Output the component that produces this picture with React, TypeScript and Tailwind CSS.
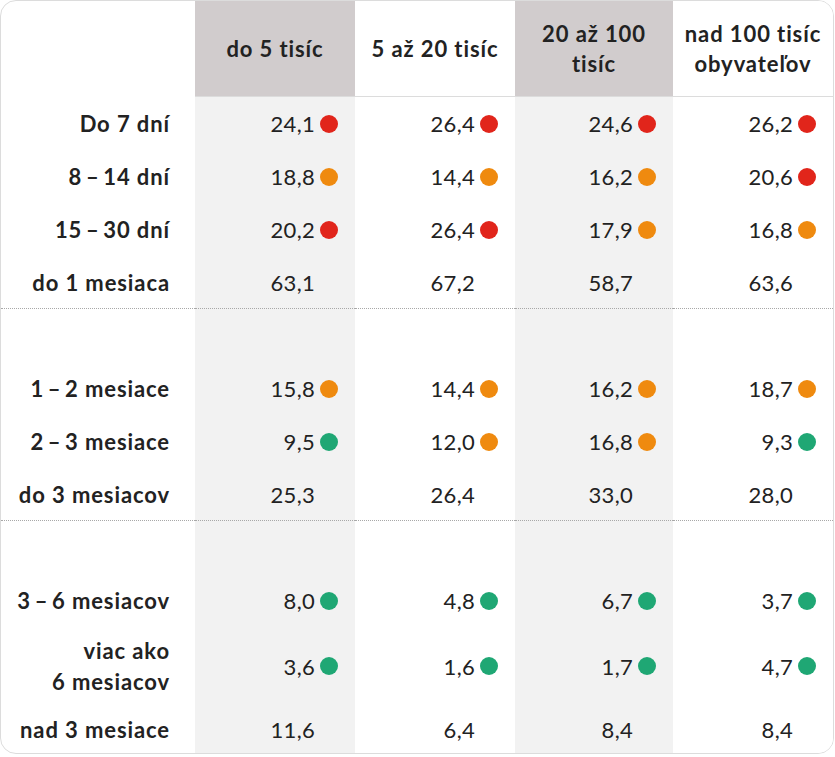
import React from "react";

type Dot = "r" | "o" | "g" | null;
type Row = { label: React.ReactNode; vals: [string, Dot][]; h: string; dotted?: boolean };

const R = "r", O = "o", G = "g";
const D = "\u2009–\u2009";

const rows: (Row | "spacer")[] = [
  { label: "Do 7 dní", vals: [["24,1", R], ["26,4", R], ["24,6", R], ["26,2", R]], h: "h-[53px]" },
  { label: `8${D}14 dní`, vals: [["18,8", O], ["14,4", O], ["16,2", O], ["20,6", R]], h: "h-[53px]" },
  { label: `15${D}30 dní`, vals: [["20,2", R], ["26,4", R], ["17,9", O], ["16,8", O]], h: "h-[53px]" },
  { label: "do 1 mesiaca", vals: [["63,1", null], ["67,2", null], ["58,7", null], ["63,6", null]], h: "h-[53px]", dotted: true },
  "spacer",
  { label: `1${D}2 mesiace`, vals: [["15,8", O], ["14,4", O], ["16,2", O], ["18,7", O]], h: "h-[53px]" },
  { label: `2${D}3 mesiace`, vals: [["9,5", G], ["12,0", O], ["16,8", O], ["9,3", G]], h: "h-[53px]" },
  { label: "do 3 mesiacov", vals: [["25,3", null], ["26,4", null], ["33,0", null], ["28,0", null]], h: "h-[53px]", dotted: true },
  "spacer",
  { label: `3${D}6 mesiacov`, vals: [["8,0", G], ["4,8", G], ["6,7", G], ["3,7", G]], h: "h-[53px]" },
  {
    label: (
      <>
        viac ako
        <br />6 mesiacov
      </>
    ),
    vals: [["3,6", G], ["1,6", G], ["1,7", G], ["4,7", G]],
    h: "h-[78px]",
  },
  { label: "nad 3 mesiace", vals: [["11,6", null], ["6,4", null], ["8,4", null], ["8,4", null]], h: "h-[48px]" },
];

const dotClass = (d: Dot) =>
  d === "r" ? "bg-[#e1251b]" : d === "o" ? "bg-[#ef8a0f]" : d === "g" ? "bg-[#1fa774]" : "bg-transparent";

const colBg = (i: number) => (i === 0 || i === 2 ? "bg-[#f2f2f2]" : "bg-white");

export default function App() {
  return (
    <div className="w-[834px] h-[754px] bg-white" style={{ fontFamily: "Lato, 'Open Sans', sans-serif" }}>
      <div className="w-[834px] h-[754px] border border-[#dcdcdc] rounded-[16px] overflow-hidden text-[#222222]">
        <div className="grid grid-cols-[194px_160px_160px_158px_160px]">
          {/* header */}
          <div className="h-[96px]" />
          {["do 5 tisíc", "5 až 20 tisíc", "20 až 100\ntisíc", "nad 100 tisíc\nobyvateľov"].map((t, i) => (
            <div
              key={i}
              className={`h-[96px] border-b border-[#dcdcdc] flex items-center justify-center text-center text-[22px] leading-[30px] tracking-[0.9px] font-bold whitespace-pre-line ${
                i === 0 || i === 2 ? "bg-[#d1cccd]" : "bg-white"
              }`}
            >
              {t}
            </div>
          ))}
          {rows.map((row, ri) =>
            row === "spacer" ? (
              <React.Fragment key={ri}>
                <div className="h-[53px]" />
                {[0, 1, 2, 3].map((i) => (
                  <div key={i} className={`h-[53px] ${colBg(i)}`} />
                ))}
              </React.Fragment>
            ) : (
              <React.Fragment key={ri}>
                <div
                  className={`${row.h} flex items-center justify-end pr-[25px] text-right text-[22px] leading-[31px] tracking-[0.9px] font-bold ${
                    row.dotted ? "border-b border-dotted border-[#a8a8a8]" : ""
                  }`}
                >
                  <span>{row.label}</span>
                </div>
                {row.vals.map(([v, d], i) => (
                  <div
                    key={i}
                    className={`${row.h} ${colBg(i)} flex items-center justify-end gap-[5px] pr-[17px] text-[22px] tracking-[0.3px] ${
                      row.dotted ? "border-b border-dotted border-[#a8a8a8]" : ""
                    }`}
                  >
                    <span>{v}</span>
                    <span className={`w-[18px] h-[18px] rounded-full ${dotClass(d)}`} />
                  </div>
                ))}
              </React.Fragment>
            )
          )}
        </div>
      </div>
    </div>
  );
}
